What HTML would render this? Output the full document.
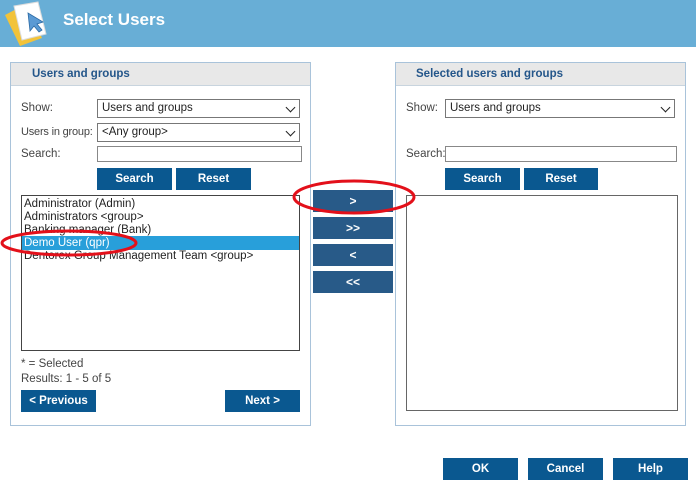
<!DOCTYPE html>
<html><head><style>
*{margin:0;padding:0;box-sizing:border-box}
body{width:696px;height:486px;background:#fff;position:relative;overflow:hidden;font-family:"Liberation Sans",Tahoma,sans-serif;font-size:11.5px;color:#333}
.a{position:absolute}
.hdr{left:0;top:0;width:696px;height:47px;background:#68aed6}
.ttl{left:63px;top:10px;color:#fff;font-weight:bold;font-size:17px}
.pn{border:1px solid #a9c3da}
.ph{background:#e8e8e8;border-bottom:1px solid #c8d4de;height:23px;color:#24568a;font-weight:bold;font-size:11.5px;line-height:23px}
.lbl{color:#444}
.sel{border:1px solid #777;background:#fff;height:19px;line-height:17px;padding-left:4px;color:#222}
.sel:after{content:"";position:absolute;right:5px;top:4px;width:6px;height:6px;border-right:1.5px solid #222;border-bottom:1.5px solid #222;transform:rotate(45deg)}
.inp{border:1px solid #888;background:#fff;height:16px}
.b{background:#0a5890;color:#fff;font-weight:bold;text-align:center;font-size:11.5px;height:22px;line-height:22px}
.m{background:#285a88;color:#fff;font-weight:bold;text-align:center;height:22px;line-height:22px;font-size:12px}
.lb{border:1px solid #444;background:#fff}
.it{position:absolute;left:2px;height:14px;line-height:14px;color:#222;white-space:nowrap}
</style></head><body>
<div class="a hdr"></div>
<svg class="a" style="left:2px;top:0" width="52" height="46" viewBox="0 0 52 46">
<polygon points="3,15 24,4 40,38 18,46" fill="#f2c33a"/>
<polygon points="12,6 36,2 44,34 20,40" fill="#fff" stroke="#ddd"/>
<polygon points="26,13 28,31 32,26 37,32 40,30 35,24 41,22" fill="#5b9ad4" stroke="#2b6aa4" stroke-width="0.8"/>
</svg>
<div class="a ttl">Select Users</div>

<div class="a pn" style="left:10px;top:62px;width:301px;height:364px"><div class="ph" style="padding-left:21px">Users and groups</div></div>
<div class="a pn" style="left:395px;top:62px;width:291px;height:364px"><div class="ph" style="padding-left:20px">Selected users and groups</div></div>

<div class="a lbl" style="left:21px;top:102px">Show:</div>
<div class="a sel" style="left:97px;top:99px;width:203px">Users and groups</div>
<div class="a lbl" style="left:21px;top:126px;font-size:11px;letter-spacing:-0.2px">Users in group:</div>
<div class="a sel" style="left:97px;top:123px;width:203px">&lt;Any group&gt;</div>
<div class="a lbl" style="left:21px;top:148px">Search:</div>
<div class="a inp" style="left:97px;top:146px;width:205px"></div>
<div class="a b" style="left:97px;top:168px;width:75px">Search</div>
<div class="a b" style="left:176px;top:168px;width:75px">Reset</div>

<div class="a lb" style="left:21px;top:195px;width:279px;height:156px">
<div class="it" style="top:1px">Administrator (Admin)</div>
<div class="it" style="top:14px">Administrators &lt;group&gt;</div>
<div class="it" style="top:27px">Banking manager (Bank)</div>
<div style="position:absolute;left:0;top:40px;width:277px;height:14px;background:#289fda"></div>
<div class="it" style="top:40px;color:#fff">Demo User (qpr)</div>
<div class="it" style="top:53px">Dentorex Group Management Team &lt;group&gt;</div>
</div>
<div class="a lbl" style="left:21px;top:358px">* = Selected</div>
<div class="a lbl" style="left:21px;top:373px">Results: 1 - 5 of 5</div>
<div class="a b" style="left:21px;top:390px;width:75px">&lt; Previous</div>
<div class="a b" style="left:225px;top:390px;width:75px">Next &gt;</div>

<div class="a m" style="left:313px;top:190px;width:80px">&gt;</div>
<div class="a m" style="left:313px;top:217px;width:80px">&gt;&gt;</div>
<div class="a m" style="left:313px;top:244px;width:80px">&lt;</div>
<div class="a m" style="left:313px;top:271px;width:80px">&lt;&lt;</div>

<div class="a lbl" style="left:406px;top:102px">Show:</div>
<div class="a sel" style="left:445px;top:99px;width:230px">Users and groups</div>
<div class="a lbl" style="left:406px;top:148px">Search:</div>
<div class="a inp" style="left:445px;top:146px;width:232px"></div>
<div class="a b" style="left:445px;top:168px;width:75px">Search</div>
<div class="a b" style="left:524px;top:168px;width:74px">Reset</div>
<div class="a lb" style="left:406px;top:195px;width:272px;height:216px;border-color:#666"></div>

<div class="a b" style="left:443px;top:458px;width:75px">OK</div>
<div class="a b" style="left:528px;top:458px;width:75px">Cancel</div>
<div class="a b" style="left:613px;top:458px;width:75px">Help</div>

<svg class="a" style="left:0;top:0" width="696" height="486">
<ellipse cx="354" cy="197" rx="60" ry="16" fill="none" stroke="#e3101a" stroke-width="3"/>
<ellipse cx="69" cy="243" rx="67" ry="12" fill="none" stroke="#e3101a" stroke-width="3"/>
</svg>
</body></html>
